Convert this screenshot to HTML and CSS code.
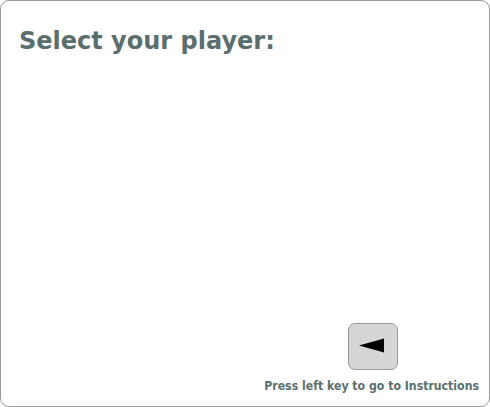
FILE: index.html
```html
<!DOCTYPE html>
<html>
<head>
<meta charset="utf-8">
<link rel="stylesheet" href="styles.css">
</head>
<body>
<div class="screen">
  <h1 class="title">Select your player:</h1>
  <div class="players"></div>
  <div class="footer">
    <div class="key">
      <svg class="arrow" width="26" height="16" viewBox="0 0 26 16"><polygon points="0,7.5 25,0.5 25,14.5" fill="#000"/></svg>
    </div>
    <div class="hint">Press left key to go to Instructions</div>
  </div>
</div>
</body>
</html>
```
FILE: styles.css
```css
html, body {
  margin: 0;
  padding: 0;
  background: #fff;
}
.screen {
  box-sizing: border-box;
  width: 490px;
  height: 407px;
  border: 1px solid #9a9a9a;
  border-radius: 9px;
  display: flex;
  flex-direction: column;
  font-family: "DejaVu Sans", sans-serif;
  color: #5a6f6d;
}
.title {
  margin: 26px 0 0 18px;
  font-size: 24px;
  font-weight: bold;
  line-height: 28px;
}
.players {
  flex: 1;
}
.footer {
  display: flex;
  flex-direction: column;
  align-items: flex-end;
  padding: 0 10px 13px 0;
}
.key {
  box-sizing: border-box;
  width: 50px;
  height: 47px;
  margin-right: 81px;
  background: #d6d6d6;
  border: 1px solid #999;
  border-radius: 7px;
  display: flex;
  align-items: center;
  justify-content: center;
}
.arrow {
  display: block;
  margin: -1px 0 0 -2px;
}
.hint {
  margin-top: 9px;
  font-family: "DejaVu Sans Condensed", "DejaVu Sans", sans-serif;
  font-size: 12.2px;
  font-weight: bold;
  line-height: 14px;
}
```
